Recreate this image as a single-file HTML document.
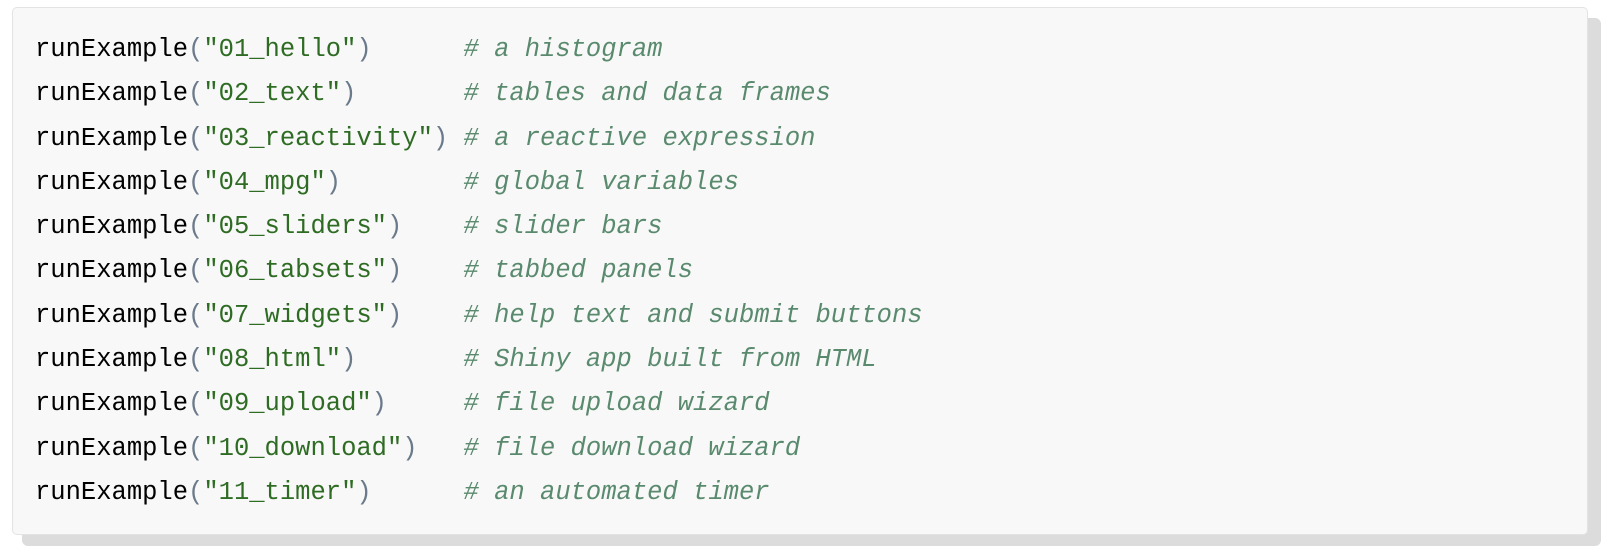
<!DOCTYPE html>
<html><head><style>
html,body{margin:0;padding:0;background:#fff;width:1614px;height:556px;overflow:hidden}
.sh{position:absolute;left:22px;top:18px;width:1579px;height:528px;background:#dcdcdc;border-radius:6px}
.box{position:absolute;left:12px;top:7px;width:1574px;height:526px;background:#f8f8f8;border:1px solid #e3e3e3;border-radius:5px}
pre{margin:0;position:absolute;left:22px;top:20px;font-family:"Liberation Mono",monospace;font-size:25.5px;line-height:44.3px;color:#000;letter-spacing:0}
.p{color:#6a7a8a}.s{color:#2e6b23}.c{color:#5a8a6e;font-style:italic}
</style></head><body>
<div class="sh"></div>
<div class="box"><pre>runExample<span class="p">(</span><span class="s">"01_hello"</span><span class="p">)</span>      <span class="c"># a histogram</span>
runExample<span class="p">(</span><span class="s">"02_text"</span><span class="p">)</span>       <span class="c"># tables and data frames</span>
runExample<span class="p">(</span><span class="s">"03_reactivity"</span><span class="p">)</span> <span class="c"># a reactive expression</span>
runExample<span class="p">(</span><span class="s">"04_mpg"</span><span class="p">)</span>        <span class="c"># global variables</span>
runExample<span class="p">(</span><span class="s">"05_sliders"</span><span class="p">)</span>    <span class="c"># slider bars</span>
runExample<span class="p">(</span><span class="s">"06_tabsets"</span><span class="p">)</span>    <span class="c"># tabbed panels</span>
runExample<span class="p">(</span><span class="s">"07_widgets"</span><span class="p">)</span>    <span class="c"># help text and submit buttons</span>
runExample<span class="p">(</span><span class="s">"08_html"</span><span class="p">)</span>       <span class="c"># Shiny app built from HTML</span>
runExample<span class="p">(</span><span class="s">"09_upload"</span><span class="p">)</span>     <span class="c"># file upload wizard</span>
runExample<span class="p">(</span><span class="s">"10_download"</span><span class="p">)</span>   <span class="c"># file download wizard</span>
runExample<span class="p">(</span><span class="s">"11_timer"</span><span class="p">)</span>      <span class="c"># an automated timer</span></pre></div>
</body></html>
